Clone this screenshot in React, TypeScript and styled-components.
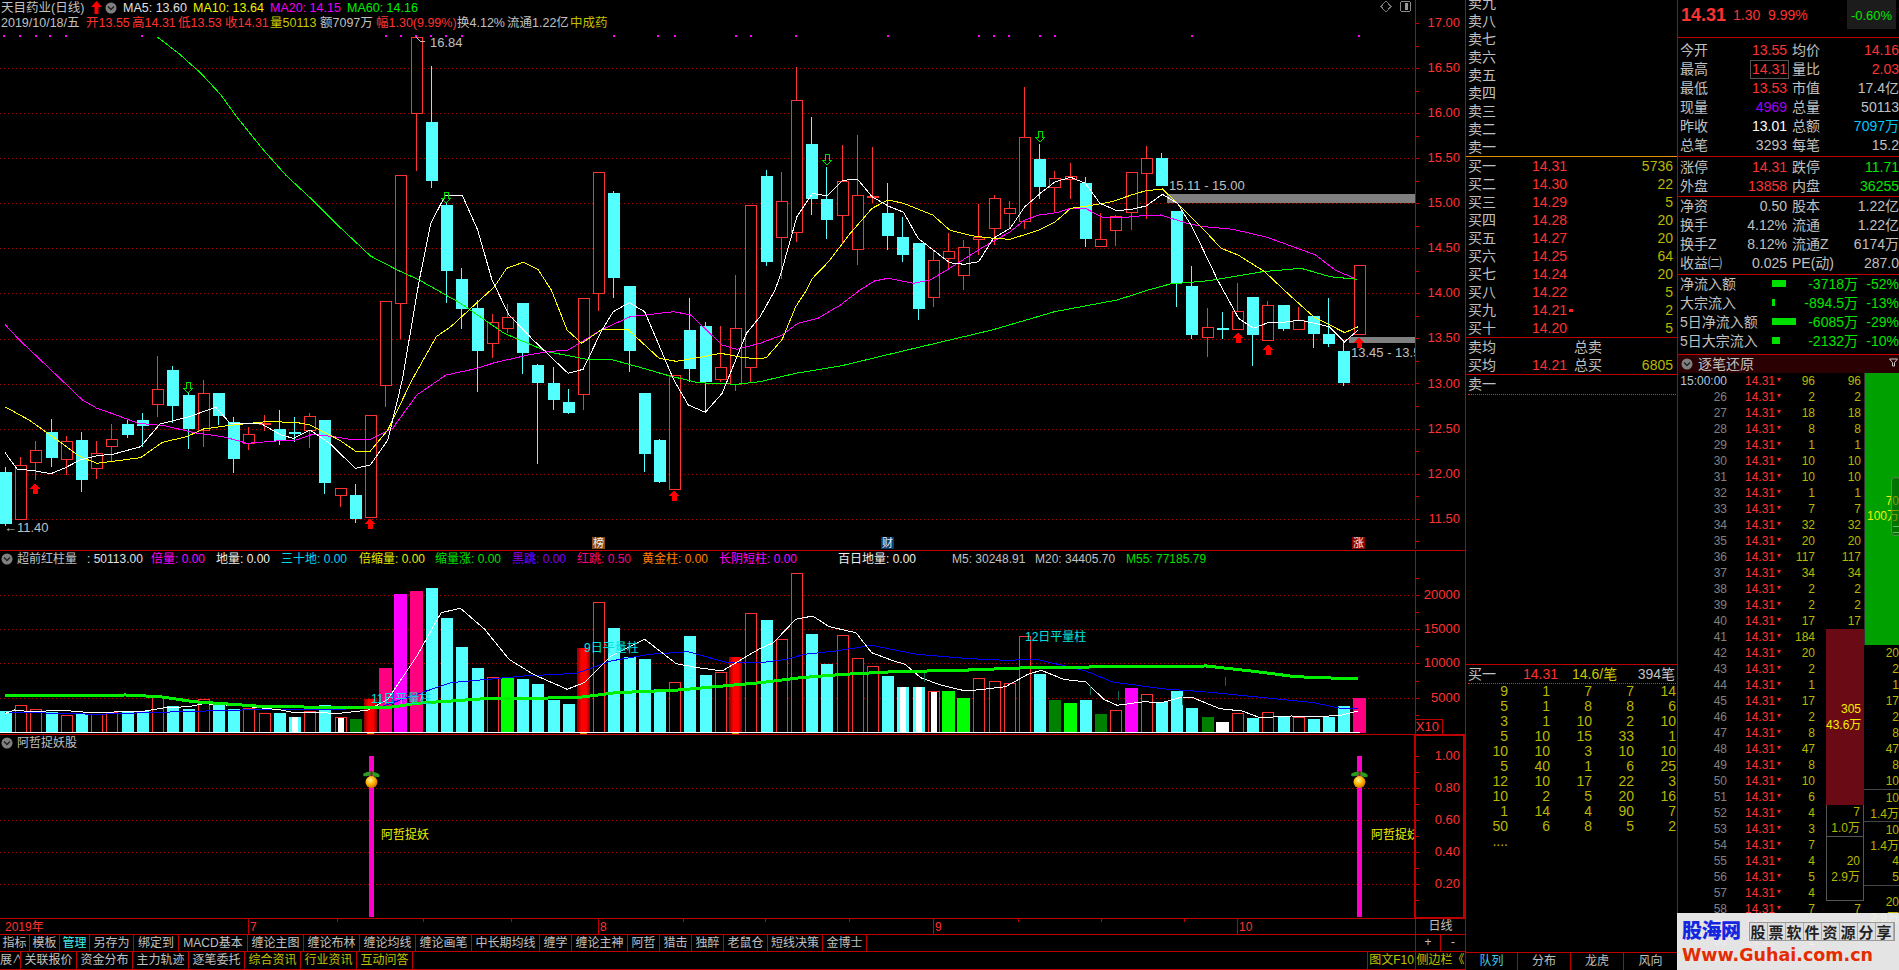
import React from "react";
import styled, { createGlobalStyle } from "styled-components";

const RED = "#ff3232";
const LINE = "#c00000";
const CYAN = "#54ffff";
const LABEL = "#c0c0c0";
const YEL = "#b8b800";
const GRN = "#00e600";
const FONT = '"Liberation Sans","Noto Sans CJK SC",sans-serif';

const Global = createGlobalStyle`
  html, body { margin: 0; padding: 0; background: #000; overflow: hidden; }
  #root { width: 1899px; height: 970px; }
`;

const Page = styled.div`
  width: 1899px; height: 970px; background: #000; display: flex; overflow: hidden; position: relative;
  font-family: ${FONT}; font-size: 12px; line-height: 16px; color: ${LABEL};
`;

/* ---------- chart column ---------- */
const ChartColumn = styled.div`
  width: 1466px; flex: none; display: flex; flex-direction: column; border-right: 1px solid ${LINE}; box-sizing: border-box;
`;
const Pane = styled.div<{ $h: number }>`
  height: ${(p) => p.$h}px; flex: none; position: relative; overflow: hidden; box-sizing: border-box;
  border-bottom: 1px solid ${LINE};
`;
const PaneSvg = styled.svg`
  position: absolute; left: 0; top: 0; display: block;
`;
const PaneHead = styled.div`
  position: absolute; left: 0; top: 0; right: 52px;
`;
const HeadRow = styled.div<{ $size?: number }>`
  display: flex; align-items: center; white-space: nowrap; height: 15px; font-size: ${(p) => p.$size ?? 12}px;
`;
const Txt = styled.span<{ $c?: string; $w?: number }>`
  color: ${(p) => p.$c ?? LABEL}; flex: none; display: block;
  ${(p) => (p.$w ? `width:${p.$w}px;` : "")}
`;
const IconSlot = styled.span<{ $w: number; $pl?: number }>`
  width: ${(p) => p.$w}px; padding-left: ${(p) => p.$pl ?? 0}px; flex: none; box-sizing: border-box; display: flex; align-items: center;
`;
const AxisText = styled.text`
  font-family: ${FONT}; font-size: 13px; fill: ${RED}; text-anchor: end;
`;
const MarkText = styled.text<{ $c?: string }>`
  font-family: ${FONT}; font-size: 12px; fill: ${(p) => p.$c ?? LABEL};
`;
const PriceMark = styled(MarkText)`
  font-size: 13px;
`;
const Tag = styled.text`
  font-family: ${FONT}; font-size: 11px; fill: #eee; text-anchor: middle;
`;

const DateBar = styled.div`
  height: 16px; flex: none; display: flex; border-bottom: 1px solid ${LINE}; box-sizing: border-box;
`;
const DateCanvas = styled.svg`
  width: 1415px; height: 15px; flex: none; display: block; border-right: 1px solid ${LINE};
`;
const DayCell = styled.div`
  flex: 1; text-align: center; line-height: 15px; color: ${LABEL};
`;
const BarRow = styled.div<{ $h: number }>`
  height: ${(p) => p.$h}px; flex: none; display: flex; border-bottom: 1px solid ${LINE}; box-sizing: border-box; white-space: nowrap;
`;
const BarItem = styled.div<{ $w: number; $c?: string }>`
  width: ${(p) => p.$w}px; flex: none; box-sizing: border-box; text-align: center; border-right: 1px solid ${LINE};
  color: ${(p) => p.$c ?? LABEL}; line-height: 16px; overflow: hidden;
`;
const SideItem = styled(BarItem)`
  border-right: 0; border-left: 1px solid ${LINE};
`;
const Fill = styled.div`
  flex: 1;
`;
const EndBox = styled.div`
  width: 50px; flex: none; display: flex; border-left: 1px solid ${LINE}; box-sizing: border-box;
`;
const EndBtn = styled.div`
  flex: 1; text-align: center; line-height: 15px; color: ${LABEL}; & + & { border-left: 1px solid ${LINE}; }
`;

/* ---------- order panel ---------- */
const OrderPanel = styled.div`
  width: 212px; flex: none; display: flex; flex-direction: column; border-right: 1px solid ${LINE};
  box-sizing: border-box; font-size: 14px;
`;
const SellBlock = styled.div`
  height: 157px; flex: none; display: flex; flex-direction: column; justify-content: flex-end; overflow: hidden;
  border-bottom: 1px solid #e09000; box-sizing: border-box;
`;
const Block = styled.div<{ $h: number }>`
  height: ${(p) => p.$h}px; flex: none; border-bottom: 1px solid ${LINE}; box-sizing: border-box;
`;
const OrderRow = styled.div`
  flex: none; height: 18px; line-height: 18px; display: grid; grid-template-columns: 64px 42px 1fr auto;
  padding: 0 4px 0 2px; position: relative;
`;
const Cell = styled.span<{ $c?: string }>`
  color: ${(p) => p.$c ?? LABEL}; white-space: nowrap;
`;
const PriceCell = styled(Cell)<{ $mark?: boolean }>`
  position: relative;
  ${(p) => (p.$mark ? `&::after{content:"";position:absolute;left:37px;top:8px;width:4px;height:3px;background:#ff2020;}` : "")}
`;
const DottedRow = styled.div`
  height: 20px; flex: none; margin: 0 1px 0 2px; border-bottom: 1px dotted #ff2020; line-height: 19px; box-sizing: border-box;
  display: flex; justify-content: space-between; padding-right: 1px;
`;
const BuyHead = styled(DottedRow)`
  display: grid; grid-template-columns: 55px 49px 60px 1fr; height: 19px; line-height: 18px;
`;
const EndCell = styled(Cell)`
  text-align: right;
`;
const Spacer = styled.div`
  height: 270px; flex: none; border-bottom: 1px solid ${LINE}; box-sizing: border-box;
`;
const QueueGrid = styled.div`
  flex: 1; display: grid; grid-template-columns: 42px repeat(4, 42px); grid-auto-rows: 15px; align-content: start; padding-right: 2px;
  line-height: 15px;
`;
const QueueNum = styled.span`
  text-align: right; color: ${YEL};
`;
const TabRow = styled.div`
  height: 18px; flex: none; display: flex; border-top: 1px solid ${LINE}; font-size: 12px; box-sizing: border-box;
`;
const TabItem = styled.div<{ $active?: boolean; $w: number }>`
  width: ${(p) => p.$w}px; text-align: center; line-height: 17px; box-sizing: border-box;
  color: ${(p) => (p.$active ? "#40d0f0" : LABEL)}; & + & { border-left: 1px solid ${LINE}; }
`;

/* ---------- quote panel ---------- */
const QuotePanel = styled.div`
  flex: 1; min-width: 0; display: flex; flex-direction: column; font-size: 14px; overflow: hidden;
`;
const QuoteHead = styled.div`
  height: 38px; flex: none; border-bottom: 1px solid ${LINE}; display: flex; align-items: flex-start; box-sizing: border-box; padding-left: 3px;
`;
const BigPrice = styled.span`
  font-weight: bold; font-size: 18px; color: ${RED}; line-height: 30px; width: 52px;
`;
const HeadValue = styled.span<{ $w: number }>`
  color: ${RED}; line-height: 30px; width: ${(p) => p.$w}px; font-size: 14px;
`;
const DeltaBox = styled.div`
  width: 49px; height: 29px; background: #1c1c1c; color: ${GRN}; text-align: center; line-height: 32px; font-size: 13px; margin-left: 40px;
`;
const InfoBlock = styled.div<{ $h: number; $pt?: number }>`
  height: ${(p) => p.$h}px; flex: none; box-sizing: border-box; padding-top: ${(p) => p.$pt ?? 0}px; border-bottom: 1px solid ${LINE}; overflow: hidden;
`;
const InfoRow = styled.div`
  height: 19px; line-height: 19px; display: grid; grid-template-columns: 107px 5px 107px; padding-left: 2px; white-space: nowrap;
`;
const InfoPair = styled.div`
  display: flex; justify-content: space-between;
`;
const BoxedValue = styled(Cell)`
  outline: 1px solid #555; padding: 0 1px; line-height: 17px; margin: 1px -1px 1px 0;
`;
const FlowRow = styled.div`
  height: 19px; line-height: 19px; display: grid; grid-template-columns: 92px 48px 38px 41px; padding-left: 2px; white-space: nowrap;
`;
const FlowBar = styled.span<{ $w: number }>`
  display: block; width: ${(p) => p.$w}px; height: 7px; background: #00e000; margin-top: 5px;
`;
const FlowValue = styled(EndCell)`
  margin-left: -20px;
`;
const TickHead = styled.div`
  height: 18px; flex: none; background: #2a0003; display: flex; align-items: center; gap: 5px; padding-left: 3px; position: relative; box-sizing: border-box;
`;
const Funnel = styled.svg`
  position: absolute; right: 1px; top: 3px;
`;
const TickArea = styled.div`
  flex: 1; position: relative; overflow: hidden; font-size: 12px;
`;
const TickRow = styled.div`
  height: 16px; line-height: 16px; display: grid; grid-template-columns: 49px 58px 30px 46px;
`;
const TickTime = styled.span<{ $first?: boolean }>`
  text-align: right; color: ${(p) => (p.$first ? "#b0c8dc" : "#808080")};
`;
const TickPrice = styled.span`
  color: ${RED}; padding-left: 18px; position: relative;
  &::after { content: ""; position: absolute; left: 50px; top: 5px; border-left: 2.5px solid transparent; border-right: 2.5px solid transparent; border-top: 4px solid #ff2020; }
`;
const TickVol = styled.span`
  text-align: right; color: ${YEL};
`;
const BigColA = styled.div`
  position: absolute; left: 148px; top: 256px; width: 38px; display: flex; flex-direction: column; text-align: right; white-space: nowrap;
`;
const BigColB = styled.div`
  position: absolute; left: 186px; top: 0; width: 35px; display: flex; flex-direction: column; text-align: right; white-space: nowrap;
`;
const OrderBlock = styled.div<{ $h: number; $bg?: string; $c?: string; $line?: boolean; $justify?: string }>`
  height: ${(p) => p.$h}px; flex: none; box-sizing: border-box; padding-right: 3px;
  background: ${(p) => p.$bg ?? "transparent"}; color: ${(p) => p.$c ?? YEL};
  display: flex; flex-direction: column; justify-content: ${(p) => p.$justify ?? "flex-end"};
  ${(p) => (p.$line ? "border: 1px solid #555; border-top: 0;" : "")}
`;
const GreenBar = styled.div`
  height: 272px; flex: none; background: #00a000; border-left: 1px solid #333; color: #f0f000; position: relative; box-sizing: border-box; padding-top: 121px;
  font-size: 12px; line-height: 15px;
`;
const Scroller = styled.div`
  position: absolute; right: -2px; top: 104px; width: 8px; height: 57px; border: 1px solid #5a8a5a; border-radius: 4px; background: rgba(0,60,0,.45);
`;
const ScrollGrip = styled.div`
  position: absolute; left: 1px; right: 1px; bottom: 2px; height: 5px; border-top: 1px solid #60c060; border-bottom: 1px solid #60c060;
`;
const SideRow = styled.div`
  height: 16px; line-height: 16px; color: ${YEL};
`;
const SideBox = styled.div<{ $h?: number; $pt?: number }>`
  height: ${(p) => p.$h ?? 32}px; padding-top: ${(p) => p.$pt ?? 0}px; line-height: 16px; color: ${YEL}; border-top: 1px solid #444; box-sizing: border-box;
`;

/* ---------- watermark ---------- */
const Watermark = styled.div`
  position: absolute; right: 0; bottom: 0; width: 222px; height: 57px; background: rgba(245,245,245,.93); box-sizing: border-box; padding: 6px 0 0 5px;
`;
const WmTop = styled.div`
  display: flex; align-items: center; gap: 8px; height: 24px;
`;
const WmLogo = styled.span`
  font-weight: 900; font-size: 20px; color: #1526e0; letter-spacing: -.5px; line-height: 24px;
`;
const WmSlogan = styled.div`
  display: flex; background: #dedede; border: 1px solid #999; height: 17px;
`;
const WmChar = styled.span`
  width: 18px; text-align: center; font-size: 15px; font-weight: bold; color: #222; line-height: 17px; border-right: 1px solid #aaa; box-sizing: border-box;
  font-family: "Noto Sans CJK SC", sans-serif;
`;
const WmUrl = styled.div`
  font-family: "DejaVu Sans", sans-serif; font-weight: bold; font-size: 17.5px; color: #e42c00; line-height: 22px; margin-top: 1px; white-space: nowrap;
`;

/* ---------- data ---------- */
const STEP = 15.21;
const cx = (i: number) => Math.round(5 + STEP * i);
type C = ["c" | "r", number, number, number, number];
const candles: C[] = [
  ["c",472,524,467,526],["r",465,519,457,519],["r",450,462,441,480],["c",432,458,419,467],["r",441,459,436,475],
  ["c",440,480,432,492],["r",453,468,441,479],["r",439,446,424,462],["c",424,435,419,438],["c",420,426,413,447],
  ["r",389,404,356,417],["c",370,406,366,423],["c",395,429,392,449],["r",393,430,380,447],["c",393,416,393,425],
  ["c",422,459,417,473],["r",434,443,427,450],["r",423,424,415,431],["c",429,441,410,445],["c",432,434,417,442],
  ["r",416,430,413,448],["c",420,483,420,494],["r",488,495,488,507],["c",495,519,484,523],["r",415,517,415,517],
  ["r",301,385,301,407],["r",175,303,175,339],["r",37,113,37,171],["c",122,181,66,188],["c",205,271,203,303],
  ["c",279,309,268,329],["c",308,351,300,392],["r",322,343,314,358],["r",317,328,304,333],["c",303,353,303,374],
  ["c",365,383,364,464],["c",383,400,367,410],["c",402,413,389,414],["r",298,394,298,410],["r",172,293,172,311],
  ["c",193,278,191,298],["c",286,351,286,372],["c",393,454,393,472],["c",440,482,439,483],["r",375,489,375,489],
  ["c",330,369,298,382],["c",326,382,322,412],["r",367,379,326,382],["r",328,384,275,391],["r",205,367,205,382],
  ["c",176,262,170,266],["r",201,237,172,279],["r",100,232,67,242],["c",144,199,117,215],["c",199,220,167,239],
  ["r",181,215,145,243],["r",195,249,135,265],["r",196,197,147,203],["c",213,236,183,250],["c",237,255,217,262],
  ["c",243,309,243,320],["r",260,297,251,307],["r",251,258,233,270],["r",247,275,240,290],["r",237,239,204,255],
  ["r",198,228,195,245],["r",208,213,201,229],["r",137,221,87,229],["c",159,187,144,199],["r",178,187,171,212],
  ["r",176,179,163,199],["c",183,239,177,247],["r",239,246,213,246],["r",216,230,215,246],["r",172,212,172,230],
  ["r",158,173,146,219],["c",158,186,153,186],["c",211,283,211,307],["c",286,335,266,339],["r",327,337,308,357],
  ["c",328,330,312,339],["r",311,329,283,329],["c",297,335,297,366],["r",305,340,301,340],["c",305,329,305,331],
  ["r",320,329,307,329],["c",316,334,316,348],["c",334,344,298,347],["c",351,383,342,386],["r",265,334,265,334],
];
type V = "c" | "r" | "g" | "d" | "m" | "p" | "w" | "cw" | "rw" | "x";
const vols: [V, number][] = [
  ["c",710],["r",704],["r",708],["c",711],["r",714],["c",713],["r",713],["r",711],["c",710],["c",710],
  ["r",696],["c",705],["c",708],["r",698],["c",703],["c",708],["r",707],["r",712],["c",712],["cw",716],
  ["r",710],["c",704],["rw",716],["d",718],["x",698],["p",667],["m",593],["p",590],["c",587],["c",617],
  ["c",646],["c",667],["r",676],["g",677],["c",678],["c",683],["c",699],["c",703],["x",647],["r",601],
  ["c",627],["c",656],["c",658],["c",688],["r",681],["c",635],["c",674],["r",671],["x",656],["r",612],
  ["c",619],["r",638],["r",572],["c",633],["c",663],["r",634],["r",657],["r",665],["c",675],["cw",686],
  ["cw",686],["rw",690],["g",690],["g",697],["r",677],["r",680],["r",682],["r",635],["c",673],["d",699],
  ["g",702],["c",699],["d",713],["r",709],["m",687],["r",693],["c",701],["c",690],["c",707],["d",716],
  ["w",721],["r",712],["c",717],["r",711],["c",715],["r",716],["c",718],["c",716],["c",705],["p",697],
];
type P = [number, number];
const z1 = (x: number, y: number): P => [x / 2.24, y / 3];
const z2 = (x: number, y: number): P => [700 + x / 2.063, y / 3];
const z3 = (x: number, y: number): P => [x / 2.063, 280 + y / 3];
const z4 = (x: number, y: number): P => [760 + x / 2.24, 280 + y / 3];
const z5 = (x: number, y: number): P => [x / 2.063, 555 + y / 3];
const z6 = (x: number, y: number): P => [760 + x / 2.24, 555 + y / 3];
const mk = (f: (x: number, y: number) => P, a: number[]) => {
  const r: P[] = [];
  for (let i = 0; i < a.length; i += 2) r.push(f(a[i], a[i + 1]));
  return r;
};
const str = (p: P[]) => p.map((q) => `${q[0].toFixed(1)},${q[1].toFixed(1)}`).join(" ");

const ma5 = [
  ...mk(z3,[10,517,35,567,70,572,105,581,135,563,165,540,200,527,235,522,290,500,330,432,390,410,445,382,475,430,540,432,580,465,605,475,640,450,680,490,733,565,764,555,800,480,830,300,865,0]),
  ...mk(z1,[965,670,998,585,1035,585,1070,690]),
  ...mk(z3,[1015,0,1050,105,1100,180,1172,280,1203,268,1240,155,1265,95,1298,68,1330,95,1390,300,1420,375,1455,397,1490,340,1540,160,1568,110]),
  ...mk(z2,[155,870,167,820,200,650,232,580,262,588,295,541,325,538,355,590,388,618,420,637,450,715,515,788,545,793,575,785,605,715,640,685,670,620,702,580,733,545,765,532,795,550,825,610,860,632,890,628,920,618,954,583,985,610,1015,680,1045,770]),
  ...mk(z4,[1025,0,1072,115,1105,145,1140,127,1175,127,1207,120,1242,130,1275,140,1309,186,1340,150]),
];
const ma10 = [
  ...mk(z3,[10,380,60,420,120,482,165,530,200,550,290,533,335,487,385,470,420,447,480,435,550,425,610,427,640,435,700,480,733,513,764,513,800,450,850,300,900,170,930,140,1020,20]),
  ...mk(z1,[1135,805,1172,787,1205,808,1235,870]),
  ...mk(z3,[1170,150,1200,190,1240,150,1295,148,1360,235,1395,244,1450,230,1487,220,1530,232,1568,237]),
  ...mk(z4,[15,232,50,178,80,80]),
  ...mk(z2,[220,870,232,835,265,785,310,700,355,625,388,600,420,610,480,645,515,690,560,707,605,715,640,718,700,690,733,665,765,625,800,618,850,605,890,585,920,572,954,567,985,610,1040,690,1075,745,1110,765,1165,815,1205,870]),
  ...mk(z4,[1190,50,1240,110,1310,158,1340,140]),
];
const ma20 = [
  ...mk(z3,[10,133,40,180,80,235,120,290,170,360,200,385,240,405,285,430,340,437,400,458,460,470,510,490,570,483,610,480,645,463,690,470,730,480,764,478,810,445,860,345,920,285,985,265,1020,248,1090,225,1130,215,1172,210,1240,150,1300,110,1390,95,1425,105,1490,195,1520,208,1568,190]),
  ...mk(z4,[50,165,85,130,130,115,180,75]),
  ...mk(z2,[330,870,360,843,388,835,440,850,475,840,515,805,580,745,640,695,670,660,700,645,735,638,765,625,795,625,830,652,870,653,905,648,950,645,1010,672,1040,680,1100,688,1170,712,1210,733,1270,765,1310,810,1350,835]),
];
const ma60 = [
  ...mk(z1,[353,112,400,160,450,220,495,285,530,350,590,450,640,525,700,600,760,680,830,768,890,810]),
  ...mk(z3,[865,0,950,70,1040,160,1130,215,1210,238,1265,240,1320,262,1380,287,1440,308,1520,313,1568,305]),
  ...mk(z4,[80,280,180,258,330,210,520,150,660,95,800,60]),
  ...mk(z2,[925,870,970,852,1050,842,1160,815,1240,805,1300,830,1355,838]),
];
const vWhite = [
  ...mk(z5,[10,473,30,462,70,468,120,462,190,470,300,465,340,455,390,452,420,443,500,450,580,462,600,468,700,472,760,462,800,430,860,300,910,170,950,157,1000,220,1050,310,1100,355,1170,400,1205,380,1260,300,1330,250,1395,323,1440,335,1490,345,1530,310,1565,280]),
  ...mk(z6,[30,260,80,190,118,180,155,212,215,230,250,290,300,315,325,325,360,365,400,385,460,405,500,400,550,392,600,355,630,343,680,370,730,378,770,430,800,448,860,437,900,440,940,425,970,425,1030,458,1080,465,1120,485,1190,480,1250,482,1300,478,1340,465]),
];
const vBlue = [
  ...mk(z5,[10,468,200,475,300,470,500,462,700,460,780,455,850,420,930,380,1080,360,1190,352,1260,315,1340,295,1420,287,1500,320,1568,320]),
  ...mk(z6,[60,310,100,295,170,285,250,268,350,295,470,308,550,313,620,310,730,345,790,378,900,398,1000,408,1130,425,1240,440,1300,457,1340,457]),
];
const vGreen = [
  ...mk(z5,[10,420,260,417,330,422,400,437,550,452,800,455,860,442,1000,428,1190,425,1270,410,1400,402,1568,380]),
  ...mk(z6,[90,365,190,355,300,347,450,343,600,335,800,332,1000,330,1100,345,1200,362,1340,369]),
];
const dots = [
  ...[10,45,80,113,147,317,865,898,932,965,998,1035,1375,1475,1512].map((x) => x / 2.24),
  ...[74,105,198,388,576,607,637,702,732,1015,1360].map((x) => 700 + x / 2.063),
];
const priceY = (p: number) => 203.3 + (15 - p) * 90.1;
const prices = [17, 16.5, 16, 15.5, 15, 14.5, 14, 13.5, 13, 12.5, 12, 11.5];

/* ---------- chart parts ---------- */
const Up = ({ x, y }: { x: number; y: number }) => (
  <polygon points={`${x},${y} ${x + 5},${y + 6} ${x + 2.5},${y + 6} ${x + 2.5},${y + 11} ${x - 2.5},${y + 11} ${x - 2.5},${y + 6} ${x - 5},${y + 6}`} fill="#ff0000" />
);
const Down = ({ x, y }: { x: number; y: number }) => (
  <polygon points={`${x - 2},${y} ${x + 2},${y} ${x + 2},${y + 6} ${x + 5},${y + 6} ${x},${y + 11} ${x - 5},${y + 6} ${x - 2},${y + 6}`} fill="none" stroke="#00e000" strokeWidth="1" />
);
const Candle = ({ i, d }: { i: number; d: C }) => {
  const x = cx(i);
  const [t, top, bot, hi, lo] = d;
  if (t === "c")
    return (
      <g>
        <line x1={x + 0.5} x2={x + 0.5} y1={hi} y2={lo} stroke={CYAN} />
        <rect x={x - 5} y={top} width={12} height={bot - top} fill={CYAN} />
      </g>
    );
  return (
    <g>
      <line x1={x + 0.5} x2={x + 0.5} y1={hi} y2={lo} stroke={RED} />
      <rect x={x - 5 + 0.5} y={top + 0.5} width={11} height={bot - top} fill="#000" stroke={RED} />
    </g>
  );
};
const MainChart = () => (
  <PaneSvg width={1465} height={549} viewBox="0 0 1465 549" shapeRendering="crispEdges">
    {[68, 113, 158, 203, 248, 293, 339, 384, 429, 474, 519].map((y) => (
      <line key={y} x1={0} x2={1415} y1={y + 0.5} y2={y + 0.5} stroke="#b00000" strokeDasharray="1 3" />
    ))}
    <line x1={1415.5} x2={1415.5} y1={0} y2={549} stroke={LINE} />
    {Array.from({ length: 24 }, (_, i) => 23 + i * 22.53).map((y) => (
      <line key={y} x1={1415} x2={1419} y1={Math.round(y) + 0.5} y2={Math.round(y) + 0.5} stroke={LINE} />
    ))}
    {prices.map((p) => (
      <AxisText key={p} x={1460} y={priceY(p) + 4}>{p.toFixed(2)}</AxisText>
    ))}
    {dots.map((x) => (
      <rect key={x} x={Math.round(x) - 1} y={35} width={2} height={2} fill="#ff00ff" />
    ))}
    {candles.map((d, i) => <Candle key={i} i={i} d={d} />)}
    <rect x={1167} y={194} width={248} height={9} fill="#808080" />
    <rect x={1349} y={337} width={66} height={6} fill="#808080" />
    <polyline points={str(ma60)} fill="none" stroke="#00ff00" />
    <polyline points={str(ma20)} fill="none" stroke="#ff00ff" />
    <polyline points={str(ma10)} fill="none" stroke="#ffff00" />
    <polyline points={str(ma5)} fill="none" stroke="#ffffff" />
    {[[35, 483], [370, 518], [674, 490], [1238, 332], [1268, 344], [1359, 337]].map(([x, y]) => <Up key={x} x={x} y={y} />)}
    {[[188, 382], [446, 192], [827, 154], [1040, 131]].map(([x, y]) => <Down key={x} x={x} y={y} />)}
    <polyline points="416,37 420,41 425,41" fill="none" stroke={LABEL} />
    <PriceMark x={430} y={47}>16.84</PriceMark>
    <PriceMark x={4} y={532}>←11.40</PriceMark>
    <PriceMark x={1169} y={190}>15.11 - 15.00</PriceMark>
    <svg x={1349} y={340} width={66} height={24}>
      <PriceMark x={2} y={17}>13.45 - 13.50</PriceMark>
    </svg>
    <rect x={592} y={537} width={13} height={12} fill="#8a4a10" />
    <Tag x={598.5} y={547}>榜</Tag>
    <rect x={881} y={537} width={13} height={12} fill="#0b3a6e" />
    <Tag x={887.5} y={547}>财</Tag>
    <rect x={1352} y={537} width={13} height={12} fill="#8b0000" />
    <Tag x={1358.5} y={547}>涨</Tag>
    <polygon points="1386,1 1391,6.5 1386,12 1381,6.5" fill="none" stroke="#777" />
    <rect x={1400.5} y={1.5} width={10} height={10} rx={2} fill="none" stroke="#888" />
    <rect x={1405} y={3} width={3} height={7} fill="#999" />
  </PaneSvg>
);

const volFill: Record<string, string> = { c: CYAN, g: "#00ff00", d: "#008000", m: "#ff00ff", p: "#ff0080", w: "#ffffff" };
const VolBar = ({ i, d }: { i: number; d: [V, number] }) => {
  const x = cx(i);
  const [k, top] = d;
  const h = 731 - top;
  if (k === "r" || k === "rw")
    return (
      <g>
        <rect x={x - 4.5} y={top + 0.5} width={11} height={h} fill="#000" stroke={RED} />
        {k === "rw" && <rect x={x - 2} y={top + 1} width={6} height={h} fill="#fff" />}
      </g>
    );
  if (k === "x")
    return (
      <g>
        <rect x={x - 6} y={top} width={13} height={h + 1} fill="url(#redbar)" />
        <ellipse cx={x + 0.5} cy={733} rx={4} ry={1.5} fill="#e0a000" />
      </g>
    );
  if (k === "cw")
    return (
      <g>
        <rect x={x - 5} y={top} width={12} height={h} fill={CYAN} />
        <rect x={x - 2} y={top} width={6} height={h} fill="#fff" />
      </g>
    );
  const wide = k !== "c" && k !== "d";
  return <rect x={wide ? x - 6 : x - 5} y={top} width={wide ? 13 : 12} height={h + (k === "p" ? 1 : 0)} fill={volFill[k]} />;
};
const VolumeChart = () => (
  <PaneSvg width={1465} height={183} viewBox="0 550 1465 183" shapeRendering="crispEdges">
    <defs>
      <linearGradient id="redbar" x1="0" x2="1" y1="0" y2="0">
        <stop offset="0" stopColor="#8c0000" />
        <stop offset="0.35" stopColor="#ff0000" />
        <stop offset="0.7" stopColor="#ff0000" />
        <stop offset="1" stopColor="#8c0000" />
      </linearGradient>
    </defs>
    {[594, 628, 662, 697].map((y) => (
      <line key={y} x1={0} x2={1415} y1={y + 0.5} y2={y + 0.5} stroke="#b00000" strokeDasharray="1 3" />
    ))}
    {vols.map((d, i) => <VolBar key={i} i={i} d={d} />)}
    <rect x={0} y={731} width={1360} height={1} fill="#fff" />
    <line x1={1415.5} x2={1415.5} y1={550} y2={733} stroke={LINE} />
    {[577, 594, 611, 628, 645, 662, 680, 697, 714].map((y) => (
      <line key={y} x1={1415} x2={1419} y1={y + 0.5} y2={y + 0.5} stroke={LINE} />
    ))}
    {[[20000, 594], [15000, 628], [10000, 662], [5000, 697]].map(([v, y]) => (
      <AxisText key={v} x={1460} y={y + 4}>{v}</AxisText>
    ))}
    <rect x={1415.5} y={718.5} width={27} height={15} fill="none" stroke={LINE} />
    <AxisText x={1439} y={730}>X10</AxisText>
    <polyline points={str(vBlue)} fill="none" stroke="#0000ff" />
    <polyline points={str(vWhite)} fill="none" stroke="#fff" />
    <polyline points={str(vGreen)} fill="none" stroke="#00f000" strokeWidth="3" />
    {[[924, 672], [1090, 685], [1118, 690], [1182, 695], [1225, 676]].map(([x, y]) => (
      <line key={x} x1={x} x2={x} y1={y} y2={y + 9} stroke="#0a6a5a" />
    ))}
    <MarkText $c="#00e0e0" x={371} y={702}>11日平量柱</MarkText>
    <MarkText $c="#00e0e0" x={584} y={651}>9日平量柱</MarkText>
    <MarkText $c="#00e0e0" x={1025} y={640}>12日平量柱</MarkText>
  </PaneSvg>
);

const Pin = ({ x }: { x: number }) => (
  <g>
    <rect x={x - 2} y={756} width={5} height={161} fill="#ff00c8" shapeRendering="crispEdges" />
    <ellipse cx={x - 3.5} cy={774} rx={4.5} ry={2} fill="#2a9a20" transform={`rotate(-15 ${x - 3.5} 774)`} />
    <ellipse cx={x + 4} cy={774.5} rx={5} ry={2} fill="#2a9a20" transform={`rotate(20 ${x + 4} 774.5)`} />
    <rect x={x - 0.5} y={771} width={2} height={5} fill="#6a3a10" />
    <circle cx={x + 0.5} cy={782} r={6} fill="url(#ball)" />
  </g>
);
const subTicks: [string, number][] = [["1.00", 756], ["0.80", 788], ["0.60", 820], ["0.40", 852], ["0.20", 884]];
const SubChart = () => (
  <PaneSvg width={1465} height={184} viewBox="0 735 1465 184">
    <defs>
      <radialGradient id="ball" cx="0.4" cy="0.35" r="0.7">
        <stop offset="0" stopColor="#fff0a0" />
        <stop offset="0.5" stopColor="#ffb800" />
        <stop offset="1" stopColor="#d06000" />
      </radialGradient>
    </defs>
    {subTicks.slice(1).map(([t, y]) => (
      <line key={t} x1={0} x2={1415} y1={y + 0.5} y2={y + 0.5} stroke="#b00000" strokeDasharray="1 3" shapeRendering="crispEdges" />
    ))}
    <Pin x={371} />
    <Pin x={1359} />
    <MarkText $c="#f0f000" x={381} y={839}>阿哲捉妖</MarkText>
    <svg x={1371} y={825} width={44} height={20}>
      <MarkText $c="#f0f000" x={0} y={14}>阿哲捉妖</MarkText>
    </svg>
    <rect x={1415} y={735} width={49} height={183} fill="none" stroke={LINE} strokeWidth="2" shapeRendering="crispEdges" />
    {[772, 804, 836, 868, 900, ...subTicks.map((t) => t[1])].map((y) => (
      <line key={y} x1={1415} x2={1419} y1={y + 0.5} y2={y + 0.5} stroke={LINE} shapeRendering="crispEdges" />
    ))}
    {subTicks.map(([t, y]) => (
      <AxisText key={t} x={1460} y={y + 4}>{t}</AxisText>
    ))}
  </PaneSvg>
);

const Chevron = () => (
  <svg width="12" height="12" viewBox="0 0 12 12" style={{ flex: "none" }}>
    <circle cx="6" cy="6" r="5.5" fill="#808080" />
    <path d="M3 4.5 L6 7.5 L9 4.5" fill="none" stroke="#222" strokeWidth="1.5" />
  </svg>
);
const BigUp = () => (
  <svg width="11" height="13" viewBox="0 0 11 13" style={{ flex: "none" }}>
    <polygon points="5.5,0 11,6 7.5,6 7.5,13 3.5,13 3.5,6 0,6" fill="#ff0000" />
  </svg>
);

/* ---------- static text data ---------- */
const sells = ["卖九", "卖八", "卖七", "卖六", "卖五", "卖四", "卖三", "卖二", "卖一"];
const buys: [string, string, string][] = [
  ["买一","14.31","5736"],["买二","14.30","22"],["买三","14.29","5"],["买四","14.28","20"],["买五","14.27","20"],
  ["买六","14.25","64"],["买七","14.24","20"],["买八","14.22","5"],["买九","14.21","2"],["买十","14.20","5"],
];
const queue = [
  [9,1,7,7,14],[5,1,8,8,6],[3,1,10,2,10],[5,10,15,33,1],[10,10,3,10,10],
  [5,40,1,6,25],[12,10,17,22,3],[10,2,5,20,16],[1,14,4,90,7],[50,6,8,5,2],
];
type QR = [string, string, string, string, string, string, boolean?];
const quoteA: QR[] = [
  ["今开","13.55",RED,"均价","14.16",RED],
  ["最高","14.31",RED,"量比","2.03",RED,true],
  ["最低","13.53",RED,"市值","17.4亿",LABEL],
  ["现量","4969","#a000f0","总量","50113",LABEL],
  ["昨收","13.01","#ffffff","总额","7097万","#00c8ff"],
  ["总笔","3293",LABEL,"每笔","15.2",LABEL],
];
const quoteB: QR[] = [
  ["涨停","14.31",RED,"跌停","11.71",GRN],
  ["外盘","13858",RED,"内盘","36255",GRN],
];
const quoteC: QR[] = [
  ["净资","0.50",LABEL,"股本","1.22亿",LABEL],
  ["换手","4.12%",LABEL,"流通","1.22亿",LABEL],
  ["换手Z","8.12%",LABEL,"流通Z","6174万",LABEL],
  ["收益㈡","0.025",LABEL,"PE(动)","287.0",LABEL],
];
const flows: [string, number, string, string][] = [
  ["净流入额",14,"-3718万","-52%"],["大宗流入",3,"-894.5万","-13%"],["5日净流入额",24,"-6085万","-29%"],["5日大宗流入",8,"-2132万","-10%"],
];
const tickVols = [96,2,18,8,1,10,10,1,7,32,20,117,34,2,2,17,184,20,2,1,17,2,8,47,8,10,6,4,3,7,4,5,4,7,4,2,5];
const tools: [string, number, string?][] = [
  ["指标",30],["模板",30],["管理",30,"#40f0f0"],["另存为",44],["绑定到",45],["MACD基本",69],["缠论主图",56],["缠论布林",56],["缠论均线",56],["缠论画笔",56],
  ["中长期均线",68],["缠学",32],["缠论主神",56],["阿哲",32],["猎击",32],["独醉",32],["老鼠仓",44],["短线决策",55],["金博士",44],
];
const links: [string, number, string?][] = [
  ["展∧",21],["关联报价",56],["资金分布",56],["主力轨迹",56],["逐笔委托",56],["综合资讯",56,"#c0c000"],["行业资讯",56,"#c0c000"],["互动问答",56,"#c0c000"],
];
const row2: [string, number, string][] = [
  ["2019/10/18/五",85,LABEL],["开13.55",46,RED],["高14.31",46,RED],["低13.53",47,RED],["收14.31",45,RED],
  ["量50113",50,"#c8c800"],["额7097万",56,LABEL],["幅1.30(9.99%)",81,RED],["换4.12%",50,LABEL],["流通1.22亿",63,LABEL],["中成药",40,"#c0c000"],
];
const volHead: [string, number, string][] = [
  ["超前红柱量",70,LABEL],[": 50113.00",64,"#e0e0e0"],["倍量: 0.00",65,"#ff00ff"],["地量: 0.00",65,"#f0f0f0"],["三十地: 0.00",78,"#00d8f0"],
  ["倍缩量: 0.00",76,"#e8e800"],["缩量涨: 0.00",77,"#00e000"],["黑跳: 0.00",65,"#8000ff"],["红跳: 0.50",65,"#ff0080"],["黄金柱: 0.00",77,"#ff8000"],
  ["长阴短柱: 0.00",119,"#ff00ff"],["百日地量: 0.00",114,"#f0f0f0"],["M5: 30248.91",83,LABEL],["M20: 34405.70",91,LABEL],["M55: 77185.79",90,"#00e000"],
];
const InfoLine = ({ r }: { r: QR }) => (
  <InfoRow>
    <InfoPair>
      <Cell>{r[0]}</Cell>
      {r[6] ? <BoxedValue $c={r[2]}>{r[1]}</BoxedValue> : <Cell $c={r[2]}>{r[1]}</Cell>}
    </InfoPair>
    <span />
    <InfoPair>
      <Cell>{r[3]}</Cell>
      <Cell $c={r[5]}>{r[4]}</Cell>
    </InfoPair>
  </InfoRow>
);

export default function App() {
  return (
    <Page>
      <Global />
      <ChartColumn>
        <Pane $h={551}>
          <MainChart />
          <PaneHead>
            <HeadRow $size={12.5}>
              <IconSlot $w={90} $pl={1}><Txt>天目药业(日线)</Txt></IconSlot>
              <IconSlot $w={15} $pl={1}><BigUp /></IconSlot>
              <IconSlot $w={18}><Chevron /></IconSlot>
              <Txt $c="#e0e0e0" $w={70}>MA5: 13.60</Txt>
              <Txt $c="#f0f000" $w={77}>MA10: 13.64</Txt>
              <Txt $c="#f000f0" $w={77}>MA20: 14.15</Txt>
              <Txt $c="#00f000">MA60: 14.16</Txt>
            </HeadRow>
            <HeadRow $size={12.5}>
              <IconSlot $w={1} />
              {row2.map(([t, w, c]) => <Txt key={t} $c={c} $w={w}>{t}</Txt>)}
            </HeadRow>
          </PaneHead>
        </Pane>
        <Pane $h={184}>
          <VolumeChart />
          <PaneHead>
            <HeadRow>
              <IconSlot $w={17} $pl={1}><Chevron /></IconSlot>
              {volHead.map(([t, w, c]) => <Txt key={t} $c={c} $w={w}>{t}</Txt>)}
            </HeadRow>
          </PaneHead>
        </Pane>
        <Pane $h={184}>
          <SubChart />
          <PaneHead>
            <HeadRow>
              <IconSlot $w={17} $pl={1}><Chevron /></IconSlot>
              <Txt>阿哲捉妖股</Txt>
            </HeadRow>
          </PaneHead>
        </Pane>
        <DateBar>
          <DateCanvas viewBox="0 0 1415 15" shapeRendering="crispEdges">
            <MarkText $c={RED} x={5} y={12}>2019年</MarkText>
            {[248, 598, 933, 1237].map((x) => <line key={x} x1={x + 0.5} x2={x + 0.5} y1={0} y2={15} stroke={LINE} />)}
            {[337, 423, 511, 683, 765, 849, 1018, 1101, 1184].map((x) => <line key={x} x1={x + 0.5} x2={x + 0.5} y1={0} y2={3} stroke={LINE} />)}
            <MarkText $c={RED} x={250} y={12}>7</MarkText>
            <MarkText $c={RED} x={600} y={12}>8</MarkText>
            <MarkText $c={RED} x={935} y={12}>9</MarkText>
            <MarkText $c={RED} x={1239} y={12}>10</MarkText>
          </DateCanvas>
          <DayCell>日线</DayCell>
        </DateBar>
        <BarRow $h={17}>
          {tools.map(([t, w, c]) => <BarItem key={t} $w={w} $c={c}>{t}</BarItem>)}
          <Fill />
          <EndBox><EndBtn>+</EndBtn><EndBtn>-</EndBtn></EndBox>
        </BarRow>
        <BarRow $h={18}>
          {links.map(([t, w, c]) => <BarItem key={t} $w={w} $c={c}>{t}</BarItem>)}
          <Fill />
          <SideItem $w={48} $c="#c0c000">图文F10</SideItem>
          <SideItem $w={50} $c="#c0c000">侧边栏《</SideItem>
        </BarRow>
      </ChartColumn>

      <OrderPanel>
        <SellBlock>
          {sells.map((s) => <OrderRow key={s}><Cell>{s}</Cell></OrderRow>)}
        </SellBlock>
        <Block $h={181}>
          {buys.map(([a, b, c]) => (
            <OrderRow key={a}>
              <Cell>{a}</Cell>
              <PriceCell $c={RED} $mark={a === "买九"}>{b}</PriceCell>
              <span />
              <EndCell $c={YEL}>{c}</EndCell>
            </OrderRow>
          ))}
        </Block>
        <Block $h={37}>
          <OrderRow><Cell>卖均</Cell><span /><Cell>总卖</Cell><span /></OrderRow>
          <OrderRow><Cell>买均</Cell><Cell $c={RED}>14.21</Cell><Cell>总买</Cell><EndCell $c={YEL}>6805</EndCell></OrderRow>
        </Block>
        <DottedRow><Cell>卖一</Cell></DottedRow>
        <Spacer />
        <BuyHead>
          <Cell>买一</Cell>
          <Cell $c={RED}>14.31</Cell>
          <Cell $c="#c8c800">14.6/笔</Cell>
          <EndCell>394笔</EndCell>
        </BuyHead>
        <QueueGrid>
          {queue.flat().map((n, i) => <QueueNum key={i}>{n}</QueueNum>)}
          <QueueNum>....</QueueNum>
        </QueueGrid>
        <TabRow>
          <TabItem $w={51} $active>队列</TabItem>
          <TabItem $w={53}>分布</TabItem>
          <TabItem $w={53}>龙虎</TabItem>
          <TabItem $w={54}>风向</TabItem>
        </TabRow>
      </OrderPanel>

      <QuotePanel>
        <QuoteHead>
          <BigPrice>14.31</BigPrice>
          <HeadValue $w={35}>1.30</HeadValue>
          <HeadValue $w={39}>9.99%</HeadValue>
          <DeltaBox>-0.60%</DeltaBox>
        </QuoteHead>
        <InfoBlock $h={119} $pt={3}>{quoteA.map((r) => <InfoLine key={r[0]} r={r} />)}</InfoBlock>
        <InfoBlock $h={40} $pt={1}>{quoteB.map((r) => <InfoLine key={r[0]} r={r} />)}</InfoBlock>
        <InfoBlock $h={78}>{quoteC.map((r) => <InfoLine key={r[0]} r={r} />)}</InfoBlock>
        <InfoBlock $h={80}>
          {flows.map(([a, w, v, p]) => (
            <FlowRow key={a}>
              <Cell>{a}</Cell>
              <span><FlowBar $w={w} /></span>
              <FlowValue $c={GRN}>{v}</FlowValue>
              <EndCell $c={GRN}>{p}</EndCell>
            </FlowRow>
          ))}
        </InfoBlock>
        <TickHead>
          <Chevron />
          <Cell>逐笔还原</Cell>
          <Funnel width="9" height="9" viewBox="0 0 9 9"><path d="M0.5 1 H8.5 L5.5 4.5 V8 H3.5 V4.5 Z" fill="none" stroke="#ccc" /></Funnel>
        </TickHead>
        <TickArea>
          {tickVols.map((v, i) => (
            <TickRow key={i}>
              <TickTime $first={i === 0}>{i === 0 ? "15:00:00" : 25 + i}</TickTime>
              <TickPrice>14.31</TickPrice>
              <TickVol>{v}</TickVol>
              <TickVol>{i < 16 ? v : ""}</TickVol>
            </TickRow>
          ))}
          <BigColA>
            <OrderBlock $h={176} $bg="#6a0a14" $c="#f0f000" $justify="center">
              <span>305</span><span>43.6万</span>
            </OrderBlock>
            <OrderBlock $h={32} $line><span>7</span><span>1.0万</span></OrderBlock>
            <OrderBlock $h={64} $line $justify="center"><span>20</span><span>2.9万</span></OrderBlock>
            <OrderBlock $h={16}><span>7</span></OrderBlock>
          </BigColA>
          <BigColB>
            <GreenBar>
              <div>70</div><div>100万</div>
              <Scroller><ScrollGrip /></Scroller>
            </GreenBar>
            {[20, 2, 1, 17, 2, 8, 47, 8, 10].map((n, i) => <SideRow key={i}>{n}</SideRow>)}
            <SideBox><div>10</div><div>1.4万</div></SideBox>
            <SideBox><div>10</div><div>1.4万</div></SideBox>
            <SideRow>4</SideRow><SideRow>5</SideRow>
            <SideBox $h={48} $pt={8}><div>20</div><div>2.9万</div></SideBox>
          </BigColB>
        </TickArea>
      </QuotePanel>

      <Watermark>
        <WmTop>
          <WmLogo>股海网</WmLogo>
          <WmSlogan>{"股票软件资源分享".split("").map((c, i) => <WmChar key={i}>{c}</WmChar>)}</WmSlogan>
        </WmTop>
        <WmUrl>Www.Guhai.com.cn</WmUrl>
      </Watermark>
    </Page>
  );
}
